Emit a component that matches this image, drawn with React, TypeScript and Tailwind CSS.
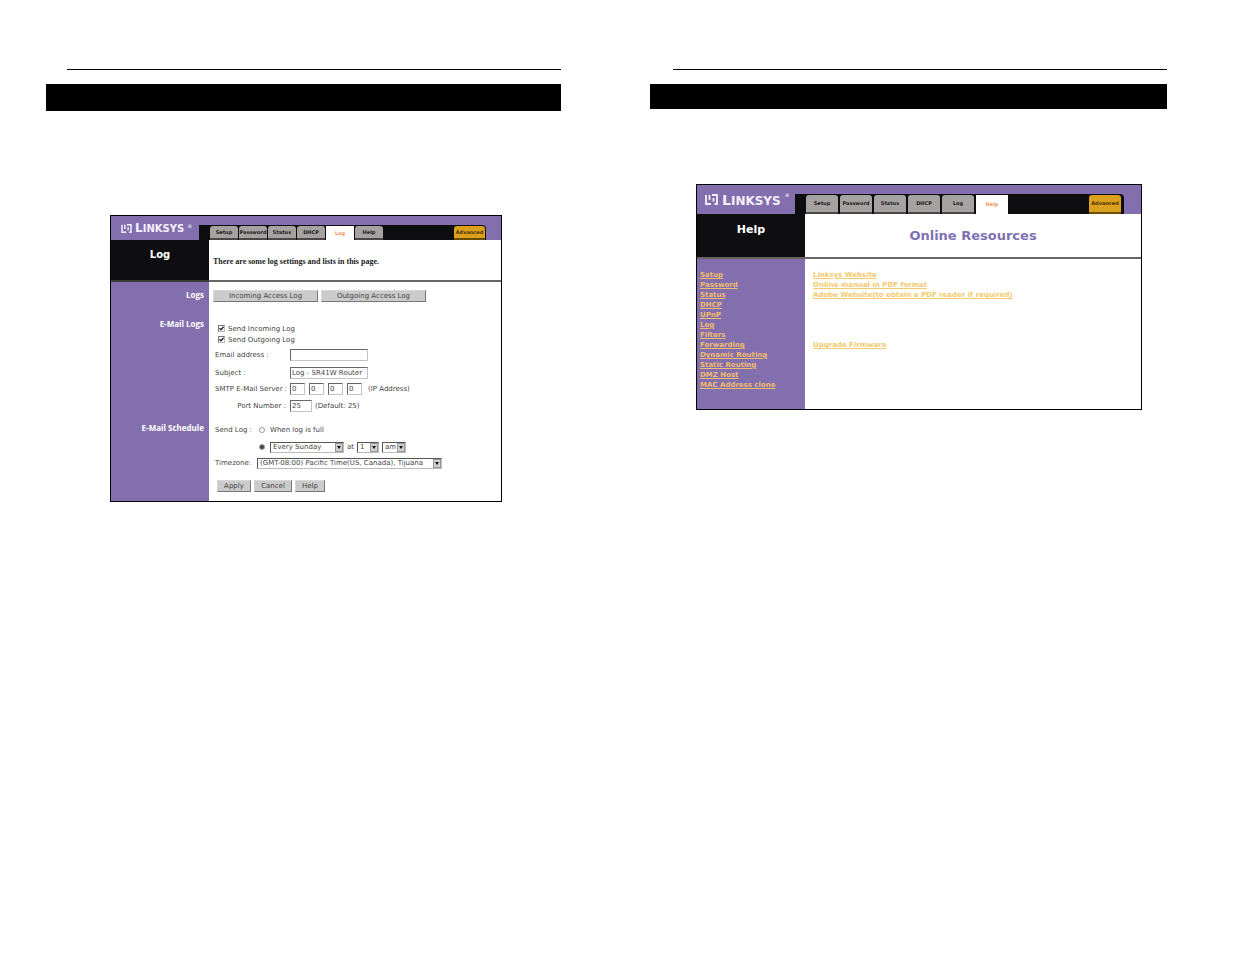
import type { ReactNode } from 'react'

const tabs = ['Setup', 'Password', 'Status', 'DHCP', 'Log', 'Help']
const topics = ['Setup', 'Password', 'Status', 'DHCP', 'UPnP', 'Log', 'Filters', 'Forwarding', 'Dynamic Routing', 'Static Routing', 'DMZ Host', 'MAC Address clone']

function Logo({ large }: { large?: boolean }) {
  return (
    <div className={large ? 'flex w-[98px] items-center gap-1 pl-2 text-[12px]' : 'flex w-[88px] items-center gap-[3px] pl-[10px] text-[10px]'}>
      <svg viewBox="0 0 13 11" className={large ? 'h-[11px] w-[13px]' : 'h-[9px] w-[11px]'} fill="none" stroke="#f4f0fa" strokeWidth="1.8">
        <path d="M1 1v9h5" />
        <path d="M4.5 1v5" />
        <path d="M7 1h5v9H9.5" />
        <path d="M8.5 4v3.5" />
      </svg>
      <span className="font-['DejaVu_Sans'] leading-none font-bold text-[#f4f0fa]">
        <span className={large ? 'text-[14px]' : 'text-[12px]'}>L</span>INKSYS
      </span>
      <span className="self-start pt-2 text-[5px] leading-none text-white">®</span>
    </div>
  )
}

function TopBar({ active, large }: { active: string; large?: boolean }) {
  return (
    <header className={large ? 'flex h-[29px] bg-[#846fae]' : 'flex h-6 bg-[#846fae]'}>
      <Logo large={large} />
      <nav className={large ? 'mr-[17px] flex h-5 flex-1 items-end gap-[2px] self-end rounded-tr-sm bg-[#0e0d0f] pr-[3px] pl-[11px]' : 'mr-[15px] flex h-[15px] flex-1 items-end gap-px self-end rounded-tr-sm bg-[#0e0d0f] pr-px pl-[11px]'}>
        {tabs.map((t) => (
          <button
            key={t}
            className={`${large ? 'h-[19px] w-8' : 'h-[14px] w-7'} ${t === active ? 'bg-white text-[#f0935c]' : 'rounded-t-[3px] border-b-2 border-[#4a4748] bg-[#a5a2a1] text-[#1c1a1a]'} text-center text-[5px] leading-none font-bold`}
          >
            {t}
          </button>
        ))}
        <button className={`${large ? 'h-[19px] w-8' : 'h-[14px] w-[31px]'} ml-auto rounded-t-[3px] border-b-2 border-[#6b4c05] bg-[#dba01c] text-center text-[5px] leading-none font-bold text-[#4a3200]`}>
          Advanced
        </button>
      </nav>
    </header>
  )
}

function Field({ id, label, children }: { id: string; label: string; children: ReactNode }) {
  return (
    <div className="flex h-3 items-center">
      <label htmlFor={id} className="w-[75px]">{label}</label>
      {children}
    </div>
  )
}

const inputClass = 'h-3 border border-[#c4c4c4] border-t-[#666] border-l-[#666] bg-white pl-px text-[7px] leading-none'

function Select({ id, label, value, width }: { id?: string; label?: string; value: string; width: string }) {
  return (
    <div className={`relative h-[11px] ${width}`}>
      <select id={id} aria-label={label} className="block h-full w-full appearance-none border border-[#bbb] border-t-[#555] border-l-[#555] bg-white pl-[2px] text-[7px] leading-none">
        <option>{value}</option>
      </select>
      <span className="pointer-events-none absolute top-px right-px flex h-[9px] w-2 items-center justify-center border border-[#999] bg-[#d0d0d0]">
        <svg viewBox="0 0 4 3" className="h-[3px] w-1"><path d="M0 0h4L2 3z" fill="#111" /></svg>
      </span>
    </div>
  )
}

function GreyButton({ width, children }: { width: string; children: ReactNode }) {
  return (
    <button className={`h-3 border border-[#d8d8d8] border-r-[#777] border-b-[#777] bg-[#cbcbcb] text-center text-[7px] leading-none ${width}`}>
      {children}
    </button>
  )
}

function Check({ label }: { label: string }) {
  return (
    <label className="flex h-[11px] items-center gap-[3px] pl-[3px]">
      <span className="relative h-[7px] w-[7px]">
        <input type="checkbox" defaultChecked className="peer block h-full w-full appearance-none border border-[#bbb] border-t-[#777] border-l-[#777] bg-white" />
        <svg viewBox="0 0 7 7" className="pointer-events-none absolute inset-0 hidden peer-checked:block" fill="none" stroke="#222" strokeWidth="1.3">
          <path d="M1.5 3.2l1.5 1.6 2.6-3" />
        </svg>
      </span>
      {label}
    </label>
  )
}

function LogPage() {
  const label = "h-3 pr-[5px] text-right font-['Open_Sans'] text-[8px] leading-3 font-bold text-white"
  return (
    <div className="border border-black bg-white font-['DejaVu_Sans'] text-[7px] leading-3 text-[#444]">
      <TopBar active="Log" />
      <div className="grid grid-cols-[98px_1fr]">
        <h2 className="h-[42px] border-b-2 border-[#3a3a3a] bg-[#0e0d0f] pt-[9px] text-center text-[10px] font-bold text-white">Log</h2>
        <p className="border-b-2 border-[#666] pt-4 pl-1 font-['Liberation_Serif'] text-[8px] font-bold text-[#222]">
          There are some log settings and lists in this page.
        </p>
      </div>
      <form className="grid grid-cols-[98px_1fr] grid-rows-[36px_104px_auto] bg-[linear-gradient(to_right,#846fae_98px,#fff_98px)]">
        <div className={label}><p className="mt-[7px]">Logs</p></div>
        <div className="flex gap-[3px] pt-2 pl-1">
          <GreyButton width="w-[105px]">Incoming Access Log</GreyButton>
          <GreyButton width="w-[105px]">Outgoing Access Log</GreyButton>
        </div>

        <div className={label}>E-Mail Logs</div>
        <div className="pt-[5px] pl-[6px]">
          <Check label="Send Incoming Log" />
          <Check label="Send Outgoing Log" />
          <div className="mt-1">
            <Field id="email" label="Email address :"><input id="email" className={`${inputClass} w-[78px]`} /></Field>
          </div>
          <div className="mt-[6px]">
            <Field id="subject" label="Subject :"><input id="subject" defaultValue="Log - SR41W Router" className={`${inputClass} w-[78px]`} /></Field>
          </div>
          <div className="mt-1">
            <Field id="smtp" label="SMTP E-Mail Server :">
              <div className="flex gap-1">
                {[1, 2, 3, 4].map((n) => (
                  <input key={n} id={n === 1 ? 'smtp' : undefined} aria-label={`IP part ${n}`} defaultValue="0" className={`${inputClass} w-[15px]`} />
                ))}
              </div>
              <span className="pl-[6px]">(IP Address)</span>
            </Field>
          </div>
          <div className="mt-[5px] flex h-3 items-center">
            <label htmlFor="port" className="w-[75px] pr-1 text-right">Port Number :</label>
            <input id="port" defaultValue="25" className={`${inputClass} w-[22px]`} />
            <span className="pl-[3px]">(Default: 25)</span>
          </div>
        </div>

        <div className={label}>E-Mail Schedule</div>
        <div className="pt-[2px] pb-[9px] pl-[6px]">
          <div className="flex h-3 items-center">
            <span className="w-11">Send Log :</span>
            <label className="flex items-center gap-[5px]">
              <input type="radio" name="send" className="h-[6px] w-[6px] appearance-none rounded-full border border-[#999] bg-white" />
              When log is full
            </label>
          </div>
          <div className="mt-[5px] flex h-3 items-center gap-[3px] pl-11">
            <input type="radio" name="send" aria-label="Send on schedule" defaultChecked className="mr-[2px] h-[6px] w-[6px] appearance-none rounded-full border border-[#999] bg-[#444]" />
            <Select label="Day" value="Every Sunday" width="w-[74px]" />
            <span>at</span>
            <Select label="Hour" value="1" width="w-[22px]" />
            <Select label="AM or PM" value="am" width="w-6" />
          </div>
          <div className="mt-1 flex h-3 items-center">
            <label htmlFor="zone" className="w-[42px]">Timezone:</label>
            <Select id="zone" value="(GMT-08:00) Pacific Time(US, Canada), Tijuana" width="w-[185px]" />
          </div>
          <div className="mt-[11px] flex gap-[3px] pl-[2px]">
            <GreyButton width="w-[34px]">Apply</GreyButton>
            <GreyButton width="w-[38px]">Cancel</GreyButton>
            <GreyButton width="w-[30px]">Help</GreyButton>
          </div>
        </div>
      </form>
    </div>
  )
}

function HelpPage() {
  return (
    <div className="border border-black bg-white font-['DejaVu_Sans'] text-[7px] leading-[10px]">
      <TopBar active="Help" large />
      <div className="grid grid-cols-[108px_1fr]">
        <h2 className="h-[45px] border-b-2 border-[#666] bg-[#0e0d0f] pt-[11px] text-center text-[11px] leading-[10px] font-bold text-white">Help</h2>
        <h1 className="border-b-2 border-[#666] pt-[14px] text-center text-[13px] leading-4 font-bold text-[#7f70b4]">Online Resources</h1>
        <ul className="h-[150px] bg-[#846fae] pt-[11px] pl-[3px] font-bold text-[#f0bb6c]">
          {topics.map((t) => (
            <li key={t}><a href="#" className="underline">{t}</a></li>
          ))}
        </ul>
        <ul className="pt-[11px] pl-2 font-bold text-[#f6c96e]">
          <li><a href="#" className="underline">Linksys Website</a></li>
          <li><a href="#" className="underline">Online manual in PDF format</a></li>
          <li><a href="#" className="underline">Adobe Website(to obtain a PDF reader if required)</a></li>
          <li className="mt-10"><a href="#" className="underline">Upgrade Firmware</a></li>
        </ul>
      </div>
    </div>
  )
}

export default function App() {
  return (
    <main className="grid min-h-screen grid-cols-[515fr_517fr] items-start gap-[89px] bg-white pt-[69px] pr-[68px] pl-[46px]">
      <section>
        <div className="ml-[21px] h-px bg-black" />
        <div className="mt-[14px] h-[27px] bg-black" />
        <div className="mt-[104px] mr-[59px] ml-16"><LogPage /></div>
      </section>
      <section>
        <div className="ml-[23px] h-px bg-black" />
        <div className="mt-[14px] h-[25px] bg-black" />
        <div className="mt-[75px] mr-[25px] ml-[46px]"><HelpPage /></div>
      </section>
    </main>
  )
}
